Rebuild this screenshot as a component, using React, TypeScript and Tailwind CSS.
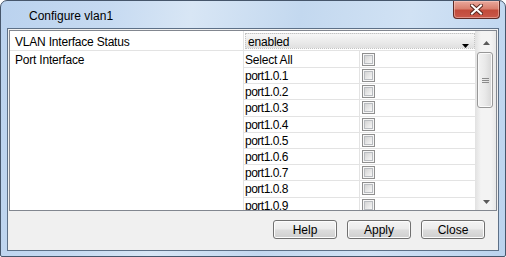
import React from 'react';

const ports = ['port1.0.1', 'port1.0.2', 'port1.0.3', 'port1.0.4', 'port1.0.5', 'port1.0.6', 'port1.0.7', 'port1.0.8', 'port1.0.9'];

function CheckBox() {
  return (
    <span className="flex w-[13px] h-[13px] border border-[#8f8f8f] bg-[#f6f6f6] p-[1px]">
      <span className="flex-1 border border-[#b9bcc0] bg-gradient-to-br from-[#d4d4d4] to-[#f7f7f7]" />
    </span>
  );
}

function Arrow({ dir, color }: { dir: 'up' | 'down'; color: string }) {
  return (
    <svg width="7" height="4" viewBox="0 0 7 4">
      <path d={dir === 'up' ? 'M0 4 L3.5 0 L7 4 Z' : 'M0 0 L7 0 L3.5 4 Z'} fill={color} />
    </svg>
  );
}

function WinButton({ label }: { label: string }) {
  return (
    <button className="w-[64px] h-[19px] rounded-[3px] border border-[#707070] bg-[linear-gradient(180deg,#f4f4f4_0%,#ebebeb_48%,#dddddd_52%,#cfcfcf_100%)] shadow-[inset_0_0_0_1px_#fcfcfc] text-[12px] leading-none text-black">
      {label}
    </button>
  );
}

export default function App() {
  return (
    <div className="w-[506px] h-[257px] bg-white">
      <div
        className="relative flex flex-col w-[506px] h-[257px] rounded-t-[7px] rounded-b-[2px] border border-[#46566b] bg-[linear-gradient(100deg,#bad2ee_0%,#c6daf1_20%,#d8e6f5_35%,#c3d8ef_55%,#d1e2f4_75%,#bbd3ee_100%)] text-black"
        style={{ fontFamily: '"Liberation Sans", Arial, sans-serif' }}
      >
        {/* Title bar */}
        <div className="h-[27px] flex items-center pl-[28px] pt-[3px] text-[12px]">Configure vlan1</div>
        <div className="absolute left-[452px] top-0 w-[47px] h-[18px] rounded-b-[4px] border border-t-0 border-[#5e2a25] bg-[linear-gradient(180deg,#e9a89c_0%,#d9806f_45%,#c24b3b_55%,#c9584a_100%)] shadow-[inset_0_0_0_1px_rgba(255,220,210,0.45)] flex items-center justify-center">
          <svg width="13" height="11" viewBox="0 0 13 11">
            <path d="M2 1.5 L11 9.5 M11 1.5 L2 9.5" stroke="#5a2820" strokeWidth="4" strokeLinecap="square" />
            <path d="M2 1.5 L11 9.5 M11 1.5 L2 9.5" stroke="#ffffff" strokeWidth="2" strokeLinecap="square" />
          </svg>
        </div>

        {/* Client area */}
        <div className="mx-[6px] h-[223px] border border-[#5d7087] bg-[#f0f0f0] flex flex-col">
          <div className="ml-[1px] mt-[1px] w-[488px] h-[181px] border border-[#828790] bg-white flex overflow-hidden text-[12px] tracking-[-0.2px]">
            <div className="w-[466px] flex flex-col overflow-hidden">
              {/* First row */}
              <div className="flex h-[20px] shrink-0 border-b border-[#e3e3e3]">
                <div className="w-[234px] border-r border-[#e3e3e3] pl-[5px] pt-[2px] flex items-center">VLAN Interface Status</div>
                <div className="w-[232px] border-r border-[#e3e3e3] pl-[1px] pt-[2px]">
                  <div className="relative h-[16px] border border-dotted border-[#c4c4c4] bg-[linear-gradient(180deg,#f7f7f7_0%,#ececec_50%,#e0e0e0_100%)] pl-[2px] pt-[1px] flex items-center">
                    enabled
                    <span className="absolute right-[5px] top-[10px] flex">
                      <Arrow dir="down" color="#000" />
                    </span>
                  </div>
                </div>
              </div>
              {/* Port rows */}
              <div className="flex flex-1">
                <div className="w-[234px] border-r border-[#e3e3e3] pl-[5px]">
                  <div className="h-[17px] pt-[1px] flex items-center">Port Interface</div>
                </div>
                <div className="w-[232px] border-r border-[#e3e3e3] flex flex-col">
                  <div className="flex h-[17px] shrink-0 border-b border-[#e3e3e3]">
                    <div className="w-[116px] border-r border-[#e3e3e3] pl-[1px] pt-[1px] flex items-center">Select All</div>
                    <div className="flex-1 pl-[2px] flex items-center">
                      <CheckBox />
                    </div>
                  </div>
                  {ports.map((p) => (
                    <div key={p} className="flex h-[16.2px] shrink-0 border-b border-[#e3e3e3]">
                      <div className="w-[116px] border-r border-[#e3e3e3] pl-[1px] pt-[1px] flex items-center tracking-[-0.5px]">{p}</div>
                      <div className="flex-1 pl-[2px] flex items-center">
                        <CheckBox />
                      </div>
                    </div>
                  ))}
                </div>
              </div>
            </div>
            {/* Scrollbar */}
            <div className="w-[20px] flex flex-col bg-[linear-gradient(90deg,#e4e4e4_0%,#f3f3f3_25%,#f3f3f3_75%,#e8e8e8_100%)]">
              <div className="h-[19px] flex items-center justify-center pl-[1px] pt-[4px]">
                <Arrow dir="up" color="#5a5a5a" />
              </div>
              <div className="ml-[1px] mt-[2px] w-[16px] h-[56px] rounded-[3px] border border-[#979797] bg-[linear-gradient(90deg,#f3f3f3_0%,#e9e9e9_50%,#d6d6d6_100%)] shadow-[inset_0_0_0_1px_#fafafa] flex flex-col items-center justify-center gap-[1px]">
                <span className="w-[7px] h-[1px] bg-[#8a8a8a]" />
                <span className="w-[7px] h-[1px] bg-[#8a8a8a]" />
                <span className="w-[7px] h-[1px] bg-[#8a8a8a]" />
              </div>
              <div className="mt-auto h-[17px] flex items-center justify-center pl-[1px]">
                <Arrow dir="down" color="#5a5a5a" />
              </div>
            </div>
          </div>
          {/* Buttons */}
          <div className="mt-[9px] flex justify-end gap-[10px] pr-[13px]">
            <WinButton label="Help" />
            <WinButton label="Apply" />
            <WinButton label="Close" />
          </div>
        </div>
      </div>
    </div>
  );
}
